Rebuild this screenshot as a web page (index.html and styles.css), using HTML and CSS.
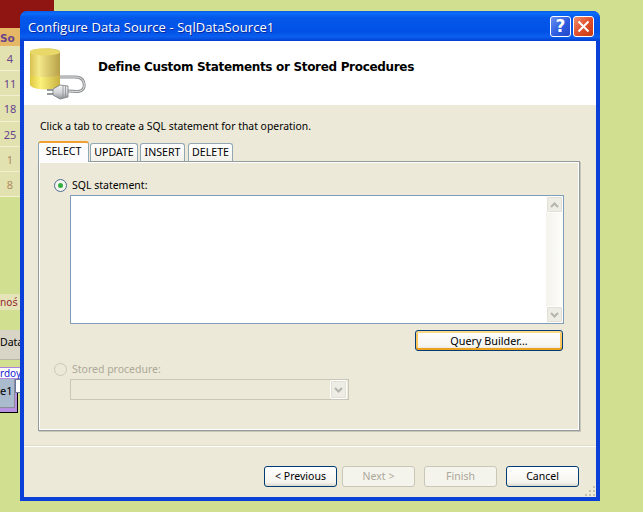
FILE: index.html
```html
<!DOCTYPE html>
<html lang="en">
<head>
<meta charset="utf-8">
<title>Configure Data Source</title>
<link rel="stylesheet" href="styles.css">
</head>
<body>
<div class="backdrop">
  <div class="redblock"></div>
  <div class="cal-head">So</div>
  <div class="cal-cell">4</div>
  <div class="cal-cell">11</div>
  <div class="cal-cell">18</div>
  <div class="cal-cell">25</div>
  <div class="cal-cell muted">1</div>
  <div class="cal-cell muted">8</div>
  <div class="strip">noś</div>
  <div class="data">Data</div>
  <div class="linkbar">rdoy</div>
  <div class="pagebox"><span class="pagecell">e1</span><span class="popup"></span></div>
</div>
<main class="window">
  <header class="titlebar">
    <span class="title">Configure Data Source - SqlDataSource1</span>
    <span class="winbtn help">?</span>
    <span class="winbtn close">
      <svg width="13" height="13" viewBox="0 0 13 13"><path d="M1.5 1.5 11.5 11.5M11.5 1.5 1.5 11.5" stroke="#fff" stroke-width="2" fill="none"/></svg>
    </span>
  </header>
  <div class="content">
    <section class="wizhead">
      <svg class="dbicon" width="56" height="54" viewBox="0 0 56 54">
        <defs>
          <linearGradient id="cyl" x1="0" x2="1" y1="0" y2="0">
            <stop offset="0" stop-color="#d8c050"/><stop offset=".3" stop-color="#f4e98a"/><stop offset="1" stop-color="#b8a048"/>
          </linearGradient>
          <linearGradient id="cyl2" x1="0" x2="1" y1="0" y2="0">
            <stop offset="0" stop-color="#e0c840"/><stop offset=".35" stop-color="#fbf27a"/><stop offset="1" stop-color="#c8b040"/>
          </linearGradient>
          <linearGradient id="plug" x1="0" x2="0" y1="0" y2="1">
            <stop offset="0" stop-color="#f4f4f4"/><stop offset=".55" stop-color="#d0d2d4"/><stop offset="1" stop-color="#8e9296"/>
          </linearGradient>
        </defs>
        <path d="M0 5C0 0 30 0 30 5V37C30 44 0 44 0 37Z" fill="url(#cyl)"/>
        <path d="M0 28C8 31 22 31 30 28V37C30 44 0 44 0 37Z" fill="url(#cyl2)"/>
        <ellipse cx="15" cy="5" rx="15" ry="3.500" fill="#e8d868"/>
        <path d="M30 30H45C52 30 55 34 54 40 53 45 48 45 38 44" fill="none" stroke="#8e9294" stroke-width="3"/>
        <path d="M30 30H45C52 30 55 34 54 40 53 45 48 45 38 44" fill="none" stroke="#e4e4e4" stroke-width="1"/>
        <path d="M23 42 30 38 38 39V50L30 52 23 48Z" fill="url(#plug)" stroke="#74787c" stroke-width=".8"/>
        <path d="M33 38.500V51M35.500 39V50.500" stroke="#8a8e92" stroke-width=".8" fill="none"/>
        <path d="M23 43H17M23 47H17" stroke="#74787c" stroke-width="1.500" fill="none"/>
      </svg>
      <h1 class="wiztitle">Define Custom Statements or Stored Procedures</h1>
    </section>
    <section class="wizbody">
      <p class="hint">Click a tab to create a SQL statement for that operation.</p>
      <div class="tabs">
        <span class="tab active">SELECT</span>
        <span class="tab update">UPDATE</span>
        <span class="tab insert">INSERT</span>
        <span class="tab delete">DELETE</span>
      </div>
      <div class="panel">
        <label class="radio-row">
          <span class="radio checked"></span>SQL statement:
        </label>
        <div class="sqlbox">
          <div class="scrollbar">
            <span class="sbtn"><svg width="9" height="6" viewBox="0 0 9 6"><path d="M1 5 4.500 1.500 8 5" stroke="#b4b4ac" stroke-width="2" fill="none"/></svg></span>
            <span class="sbtn"><svg width="9" height="6" viewBox="0 0 9 6"><path d="M1 1 4.500 4.500 8 1" stroke="#b4b4ac" stroke-width="2" fill="none"/></svg></span>
          </div>
        </div>
        <div class="qb-row"><button class="btn qb">Query Builder...</button></div>
        <label class="radio-row disabled">
          <span class="radio"></span>Stored procedure:
        </label>
        <div class="combo">
          <span class="sbtn combo-btn"><svg width="9" height="6" viewBox="0 0 9 6"><path d="M1 1 4.500 4.500 8 1" stroke="#b4b4ac" stroke-width="2" fill="none"/></svg></span>
        </div>
      </div>
      <div class="rule"></div>
      <footer class="actions">
        <button class="btn">&lt; Previous</button>
        <button class="btn off">Next &gt;</button>
        <button class="btn off finish">Finish</button>
        <button class="btn cancel">Cancel</button>
      </footer>
      <svg class="grip" width="12" height="12" viewBox="0 0 12 12"><path d="M9 1h2v2H9zM5 5h2v2H5zM9 5h2v2H9zM1 9h2v2H1zM5 9h2v2H5zM9 9h2v2H9z" fill="#c4c1ac"/></svg>
    </section>
  </div>
</main>
</body>
</html>
```
FILE: styles.css
```css
* { box-sizing: border-box; }
html, body { margin: 0; height: 100%; }
body {
  background: #d0e090;
  font-family: "Noto Sans", "DejaVu Sans", sans-serif;
  font-size: 11px;
  color: #000;
  overflow: hidden;
  position: relative;
}
.backdrop { width: 20px; display: flex; flex-direction: column; }
.redblock { width: 54px; height: 28px; background: #8f1512; flex: none; }
.cal-head {
  height: 18px; width: 20px; background: #e6b765; color: #68448c;
  font: bold 10.500px "DejaVu Sans", sans-serif; line-height: 20px; flex: none;
}
.cal-cell {
  height: 25.200px; width: 20px; background: #e2e2b0; border-bottom: 1px solid #f2f0d0;
  color: #68448c; font: 11px "Noto Sans", sans-serif; line-height: 25px; text-align: center; flex: none;
}
.cal-cell.muted { color: #b08a60; }
.strip {
  margin-top: 97px; height: 16px; background: #e4e4b8; color: #94242c; flex: none;
  font: 10px "DejaVu Sans", sans-serif; line-height: 17px; white-space: nowrap;
}
.data {
  margin-top: 20px; height: 30px; background: #d8d4c6; flex: none;
  font: 10.500px "Noto Sans", sans-serif; line-height: 24px;
  border-bottom: 1px solid #b8b4a8;
}
.linkbar {
  margin-top: 7px; height: 12px; color: #2020d0; flex: none; padding-top: 1px;
  font: 10px "Noto Sans", sans-serif; line-height: 11px; white-space: nowrap;
  background: linear-gradient(#b080e0 1px, #fff 1px, #fff 11px, #b890e0 11px);
}
.pagebox {
  height: 34px; width: 18px; background: #b890e0; border-bottom: 1px solid #000; border-right: 1px solid #000;
  position: relative; flex: none;
}
.pagecell {
  display: block; width: 15px; height: 29px; background: #a9bbcd; color: #000;
  font: 11px "Noto Sans", sans-serif; line-height: 24px; border-right: 1px solid #8a8a9a; border-bottom: 1px solid #8a8a9a;
}
.popup {
  position: absolute; left: 15px; top: 0; width: 6px; height: 14px; background: #fff; border: 1px solid #6878a0;
}
.window {
  position: absolute; left: 20px; top: 11px; width: 580px; height: 490px;
  background: #0a3fd8; border-radius: 7px 7px 0 0;
  display: flex; flex-direction: column;
  padding: 0 4px 4px;
}
.titlebar {
  margin: 0 -4px; height: 30px; flex: none;
  border-radius: 7px 7px 0 0;
  background: linear-gradient(#0a5ce8 0, #0a6cf8 8%, #0458ea 22%, #0251e6 70%, #0a5ff0 86%, #0340cf 100%);
  display: flex; align-items: center; padding: 0 6px 0 8px; gap: 2px;
}
.title {
  flex: 1; color: #fff; font: 13px "Open Sans", sans-serif; letter-spacing: .08px; padding-top: 2px;
  text-shadow: 1px 1px 0 #0a2a9a; white-space: nowrap;
}
.winbtn {
  width: 21px; height: 21px; border: 1px solid #fff; border-radius: 3px;
  display: flex; align-items: center; justify-content: center; color: #fff;
}
.help { background: linear-gradient(135deg, #6a90f0, #2d5ce0 55%, #2446c8); font: bold 17px "DejaVu Sans", sans-serif; }
.close { background: linear-gradient(135deg, #f09070, #e0502c 50%, #c83810); }
.content { flex: 1; display: flex; flex-direction: column; min-height: 0; }
.wizhead { height: 64px; background: #fff; display: flex; align-items: center; flex: none; padding-left: 6px; }
.dbicon { flex: none; margin-top: 2px; }
.wiztitle { margin: 0 0 12px 12px; font: bold 12px "DejaVu Sans", sans-serif; letter-spacing: -.32px; }
.wizbody { flex: 1; background: #ece9d8; position: relative; padding: 15px 0 0 14px; display: flex; flex-direction: column; }
.hint { margin: 0 0 0 2px; height: 21px; line-height: 13px; font-size: 10.400px; }
.tabs { display: flex; align-items: flex-end; height: 20px; position: relative; z-index: 1; }
.tab {
  height: 18px; margin-left: 1px; margin-right: 1px; background: linear-gradient(#fff, #f2f1ea);
  border: 1px solid #91a7b4; border-bottom: 0; border-radius: 3px 3px 0 0;
  text-align: center; line-height: 17px; font-size: 10.600px; flex: none;
}
.tab.active {
  height: 21px; width: 51px; margin: 0 0 -1px; background: #fcfcfe;
  border-top: 2px solid #f0a030; line-height: 17px;
}
.update { width: 48px; margin-left: 1px; }
.insert { width: 45px; }
.delete { width: 45px; margin-left: 2px; }
.panel {
  width: 542px; height: 270px; border: 1px solid #919b9c;
  box-shadow: inset 1px 1px 0 #fff, inset -1px -1px 0 #fff, 1px 1px 0 #c8c6b8;
  padding: 16px 16px 0 15px; display: flex; flex-direction: column; flex: none;
}
.radio-row { display: flex; align-items: center; height: 14px; line-height: 14px; font-size: 10.500px; gap: 5px; }
.radio {
  width: 13px; height: 13px; border: 1px solid #4d6d90; border-radius: 50%; background: #f4f4ee; position: relative; flex: none;
}
.radio.checked::after {
  content: ""; position: absolute; left: 3px; top: 3px; width: 5px; height: 5px; border-radius: 50%; background: #30b040;
}
.sqlbox {
  margin: 3px 0 0 16px; width: 494px; height: 129px; background: #fff; border: 1px solid #7f9db9;
  display: flex; justify-content: flex-end; flex: none;
}
.scrollbar {
  width: 17px; background: linear-gradient(90deg, #f4f3ec, #fdfdfb); display: flex; flex-direction: column; justify-content: space-between;
}
.sbtn {
  width: 17px; height: 17px; background: #eeede5; border: 1px solid #fff; border-radius: 2px;
  box-shadow: inset 0 0 0 1px #e2e0d6; display: flex; align-items: center; justify-content: center; flex: none;
}
.qb-row { display: flex; justify-content: flex-end; margin: 6px 0 0; width: 509px; flex: none; }
.btn {
  width: 73px; height: 21px; padding: 0; border: 1px solid #003c74; border-radius: 3px;
  background: linear-gradient(#fff, #f5f4ee 80%, #dcd8cc);
  font: 10.500px "Noto Sans", "DejaVu Sans", sans-serif; color: #000; line-height: 17px;
}
.qb { width: 148px; font-size: 10.800px; box-shadow: inset 0 2px 0 #fbd98a, inset 0 -2px 0 #eda21d, inset 2px 0 0 #f9c660, inset -2px 0 0 #f9c660; }
.radio-row.disabled { margin-top: 11px; color: #aca899; }
.radio-row.disabled .radio { border-color: #cac8bb; background: transparent; }
.combo {
  margin: 3px 0 0 16px; width: 279px; height: 21px; border: 1px solid #c9c7ba;
  display: flex; justify-content: flex-end; align-items: center; padding-right: 1px; flex: none;
}
.combo-btn { height: 19px; }
.rule { height: 1px; background: #fff; width: 572px; margin: 15px 0 0 -14px; box-shadow: 0 -1px 0 #e0ddcc; flex: none; }
.actions { display: flex; margin: 19px 0 0 226px; gap: 5px; flex: none; }
.btn.off { border-color: #c9c7ba; color: #aca899; background: #f4f3ec; }
.finish { margin-left: 4px; }
.cancel { margin-left: 4px; }
.grip { position: absolute; right: 0; bottom: 0; }
```
